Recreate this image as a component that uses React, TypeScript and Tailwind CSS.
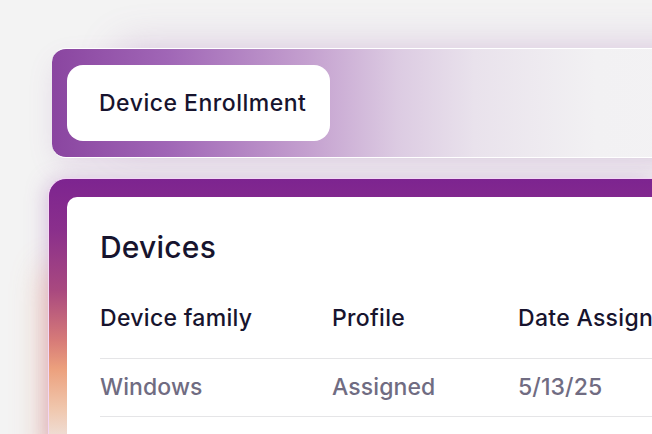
const FONT = "font-['Inter','Liberation_Sans',sans-serif]";

const ROWS = [{ family: "Windows", profile: "Assigned", date: "5/13/25" }];

export default function App() {
  return (
    <div className={`w-[652px] h-[434px] overflow-hidden bg-[#f3f3f3] pt-[48px] ${FONT}`}>
      {/* enrollment bar */}
      <div className="ml-[52px] w-[640px] h-[110px] rounded-l-[14px] border-y border-white bg-[linear-gradient(90deg,#8a45a0_0%,#a066b6_18%,#c4a0cf_40%,#dccbe2_54%,#e9e2ec_66%,#f2f1f3_85%,#f3f2f4_100%)] shadow-[60px_-10px_40px_-6px_rgba(150,80,170,0.22),0_10px_30px_-6px_rgba(150,80,170,0.2)] pl-[15px] pt-[16px]">
        <div className="w-[263px] h-[76px] rounded-[16px] bg-white flex items-center pl-[32px]">
          <span className="text-[23px] font-medium text-[#17142e] tracking-[0.5px]">Device Enrollment</span>
        </div>
      </div>

      {/* devices card */}
      <div className="mt-[20px] ml-[48px] w-[620px] h-[280px] rounded-tl-[18px] border-l border-t border-[#f3d6f5] bg-[linear-gradient(180deg,#7d2490_0%,#8a2f8c_18%,#a9497f_40%,#d77b78_58%,#eca07d_68%,#f0c6ac_82%,#efe4e0_95%)] shadow-[-14px_80px_34px_-12px_rgba(240,150,105,0.45),-8px_-4px_22px_-8px_rgba(150,70,170,0.35)] pt-[18px] pl-[18px]">
        <div className="h-full rounded-tl-[10px] bg-white pl-[33px] pt-[32px]">
          <h2 className="text-[30px] leading-[36px] font-medium text-[#17142e] tracking-[0.2px]">Devices</h2>
          <div className="mt-[39px] flex h-[28px] items-center text-[23px] font-medium text-[#17142e] tracking-[0.3px]">
            <div className="w-[232px] shrink-0">Device family</div>
            <div className="w-[186px] shrink-0">Profile</div>
            <div className="shrink-0 whitespace-nowrap">Date Assigned</div>
          </div>
          <div className="mt-[26px] border-t border-[#e5e5e7]">
            {ROWS.map((r) => (
              <div key={r.family} className="flex h-[58px] items-center border-b border-[#e5e5e7] text-[23px] font-medium text-[#706c82] tracking-[0.1px]">
                <div className="w-[232px] shrink-0">{r.family}</div>
                <div className="w-[186px] shrink-0">{r.profile}</div>
                <div className="shrink-0">{r.date}</div>
              </div>
            ))}
          </div>
        </div>
      </div>
    </div>
  );
}
